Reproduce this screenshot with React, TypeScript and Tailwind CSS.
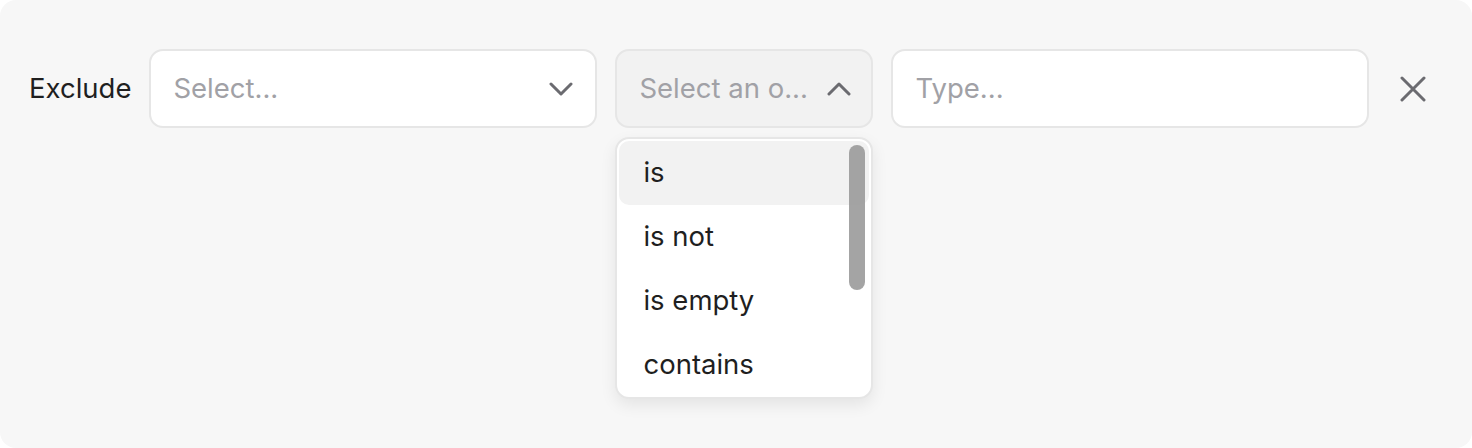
import React from "react";

const font = { fontFamily: "Inter, 'Noto Sans', sans-serif" };

function ChevronDown() {
  return (
    <svg width="24" height="24" viewBox="0 0 24 24" fill="none" stroke="#6b6b70" strokeWidth="3" strokeLinecap="round" strokeLinejoin="round">
      <path d="M2 7 L12 17 L22 7" />
    </svg>
  );
}

function ChevronUp() {
  return (
    <svg width="24" height="24" viewBox="0 0 24 24" fill="none" stroke="#6b6b70" strokeWidth="3" strokeLinecap="round" strokeLinejoin="round">
      <path d="M2 17 L12 7 L22 17" />
    </svg>
  );
}

function XIcon() {
  return (
    <svg width="26" height="26" viewBox="0 0 26 26" fill="none" stroke="#6b6b70" strokeWidth="3" strokeLinecap="round">
      <path d="M2 2 L24 24 M24 2 L2 24" />
    </svg>
  );
}

export default function App() {
  const items = ["is", "is not", "is empty", "contains"];
  return (
    <div className="w-[1472px] h-[448px] bg-white" style={font}>
      <div className="w-full h-full bg-[#f7f7f7] rounded-[16px] pl-[29px] pt-[49px]">
        <div className="flex items-center gap-[18px]">
          <span className="text-[27.5px] text-[#1f1f1f] leading-none">Exclude</span>
          <div className="w-[448px] h-[79px] bg-white border-2 border-[#e6e6e6] rounded-[14px] flex items-center justify-between pl-[22px] pr-[22px]">
            <span className="text-[27.5px] text-[#a1a1a6]">Select...</span>
            <ChevronDown />
          </div>
          <div className="relative">
            <div className="w-[258px] h-[79px] bg-[#f2f2f2] border-2 border-[#e6e6e6] rounded-[14px] flex items-center justify-between pl-[22px] pr-[20px]">
              <span className="text-[27.5px] text-[#a1a1a6] whitespace-nowrap">Select an o...</span>
              <ChevronUp />
            </div>
            <div className="absolute left-0 top-[88px] w-[258px] h-[262px] bg-white border-2 border-[#e6e6e6] rounded-[14px] shadow-[0_6px_16px_rgba(0,0,0,0.08)] p-[2px] overflow-hidden">
              <div className="flex flex-col">
                {items.map((it, i) => (
                  <div
                    key={it}
                    className={
                      i === 0
                        ? "h-[64px] flex items-center pl-[24px] text-[27.5px] text-[#1f1f1f] bg-[#f2f2f2] rounded-[10px]"
                        : "h-[64px] flex items-center pl-[24px] text-[27.5px] text-[#1f1f1f]"
                    }
                  >
                    {it}
                  </div>
                ))}
              </div>
              <div className="absolute right-[6px] top-[6px] w-[16px] h-[145px] rounded-full bg-[#9a9a9a]/90" />
            </div>
          </div>
          <div className="w-[478px] h-[79px] bg-white border-2 border-[#e6e6e6] rounded-[14px] flex items-center pl-[22px]">
            <span className="text-[27.5px] text-[#a1a1a6]">Type...</span>
          </div>
          <div className="ml-[6px] flex items-center justify-center w-[40px] h-[40px]">
            <XIcon />
          </div>
        </div>
      </div>
    </div>
  );
}
